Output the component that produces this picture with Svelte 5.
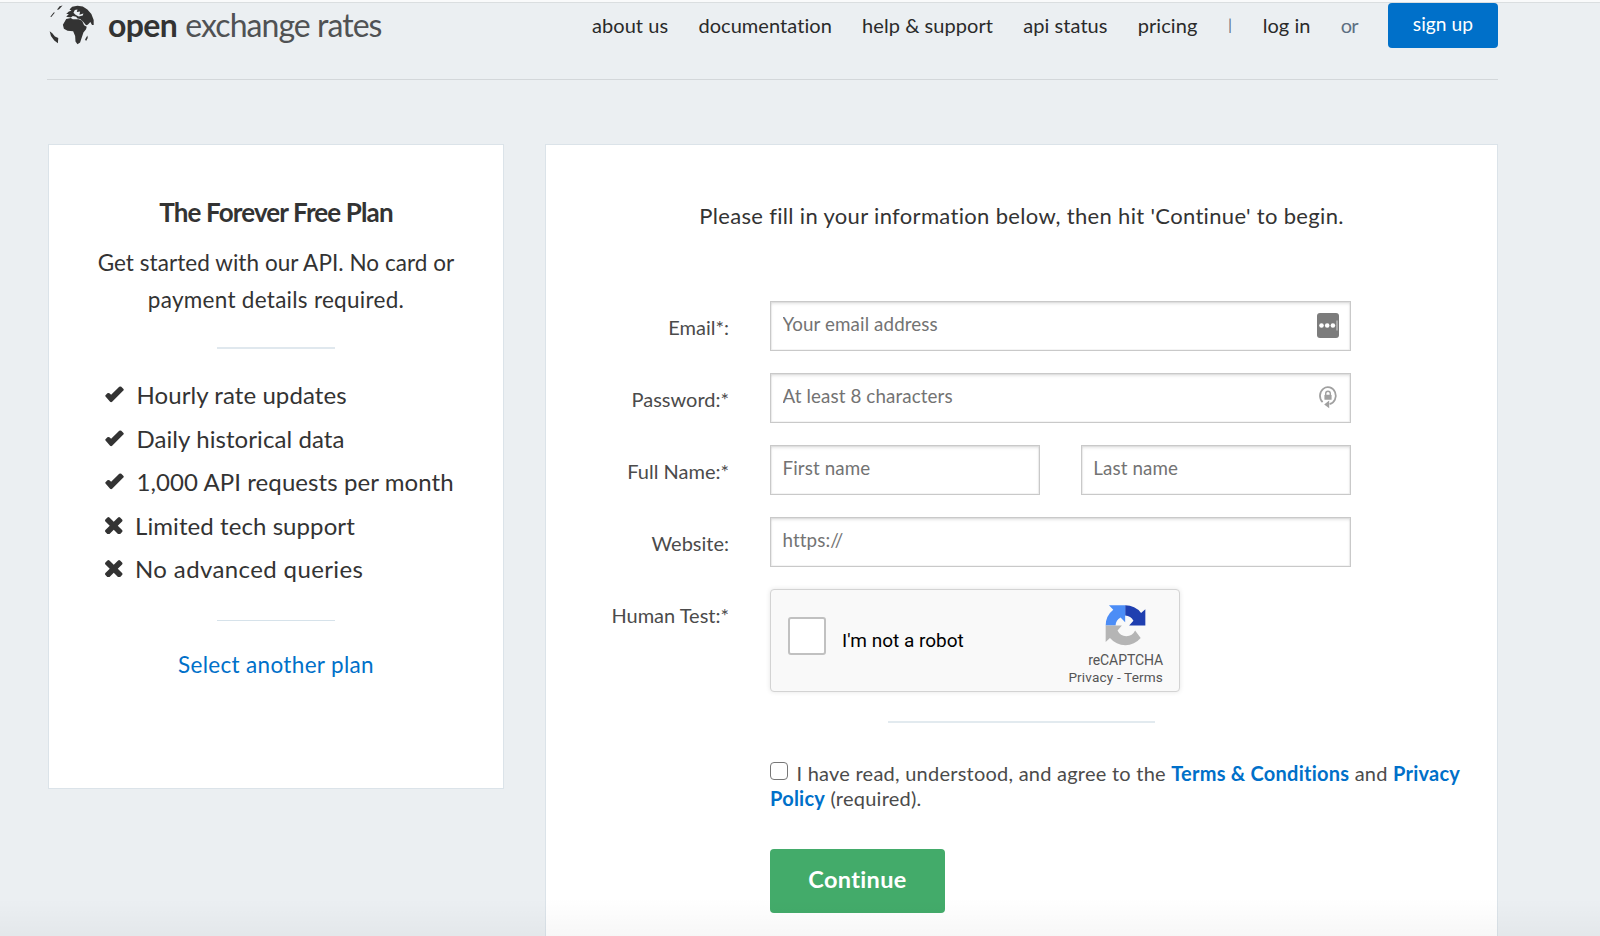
<script>
  const links = ['about us', 'documentation', 'help & support', 'api status', 'pricing'];
  const features = [
    { ok: true, text: 'Hourly rate updates' },
    { ok: true, text: 'Daily historical data' },
    { ok: true, text: '1,000 API requests per month' },
    { ok: false, text: 'Limited tech support' },
    { ok: false, text: 'No advanced queries', wide: true }
  ];
</script>

<div class="page">
  <header class="header">
    <a class="brand" href="#home" aria-label="open exchange rates">
      <svg class="globe" viewBox="50 12 148 126" aria-hidden="true">
        <path d="M108 42L116 34L124 32L118 28L126 20L142 17L158 19L172 28L184 42L191 60L191 75L186 75L181 66L173 74L168 76L158 64L150 57L142 55L138 50L128 48L122 52L108 50L116 42Z" />
        <path d="M98 74L108 57L122 54L128 58L146 58L156 62L162 76L170 80L168 88L160 98L156 110L150 128L142 133L136 125L135 108L129 94L112 92L101 86Z" />
        <path d="M88 18L97 16L86 28L80 29ZM70 37L74 37L63 51L60 50ZM58 94L66 100L74 110L84 114L83 130L72 122L62 108ZM165 119L172 107L173 114L168 123Z" />
        <path class="gap" d="M134 30L142 28L140 36L150 34L148 44L160 40L158 46L146 49L136 44L130 38Z" />
      </svg>
      <span class="wordmark"><b>open</b><span>exchange rates</span></span>
    </a>
    <nav class="nav">
      {#each links as link}<a href="#nav">{link}</a>{/each}
      <span class="muted bar">|</span>
      <a href="#login">log in</a>
      <span class="muted or">or</span>
      <a class="signup" href="#signup">sign up</a>
    </nav>
  </header>

  <main class="columns">
    <aside class="card plan">
      <h2>The Forever Free Plan</h2>
      <p>Get started with our API. No card or<br /><span class="second">payment details required.</span></p>
      <hr class="rule first" />
      <ul>
        {#each features as f}
          <li class:cross={!f.ok} class:wide={f.wide}>
            {#if f.ok}
              <svg class="mark" viewBox="0 0 56 50" aria-hidden="true"><path d="M1.500 31Q0 29 1.500 27L7 21.500Q10 19 13 21.500L18 25.500L42 2.500Q45 0 48 2.500L54.500 8.500Q56.500 11 54 13.500L21 46.500Q18 49 15 46.500Z" /></svg>
            {:else}
              <svg class="mark" viewBox="302 366 1188 1188" aria-hidden="true"><path d="M1490 1322q0 40-28 68l-136 136q-28 28-68 28t-68-28l-294-294-294 294q-28 28-68 28t-68-28l-136-136q-28-28-28-68t28-68l294-294-294-294q-28-28-28-68t28-68l136-136q28-28 68-28t68 28l294 294 294-294q28-28 68-28t68 28l136 136q28 28 28 68t-28 68l-294 294 294 294q28 28 28 68z" /></svg>
            {/if}
            <span>{f.text}</span>
          </li>
        {/each}
      </ul>
      <hr class="rule" />
      <a class="switch" href="#plans">Select another plan</a>
    </aside>

    <section class="card account">
      <p class="intro">Please fill in your information below, then hit 'Continue' to begin.</p>
      <form class="form">
        <label for="email">Email*:</label>
        <div class="field">
          <input id="email" placeholder="Your email address" />
          <svg class="addon" viewBox="0 0 22 25" aria-hidden="true">
            <rect width="22" height="25" rx="3" fill="#7c7c7c" />
            <circle cx="4.5" cy="12.5" r="2.3" fill="#fff" /><circle cx="10.2" cy="12.5" r="2.3" fill="#fff" /><circle cx="15.9" cy="12.5" r="2.3" fill="#fff" />
            <path d="M20 7.5v10" stroke="#d6d6d6" />
          </svg>
        </div>

        <label for="password">Password:*</label>
        <div class="field">
          <input id="password" placeholder="At least 8 characters" />
          <svg class="addon lock" viewBox="0 0 22 25" aria-hidden="true">
            <path d="M5.600 17.200A7.900 8.600 0 1 1 12.600 19.200" fill="none" stroke="#a0a0a0" stroke-width="1.8" />
            <path d="M7.200 19.400L12.200 15.600V23.200Z" fill="#a0a0a0" />
            <path d="M8.700 10.400V8.600a2.300 2.300 0 0 1 4.600 0V10.400" fill="none" stroke="#a0a0a0" stroke-width="1.4" />
            <rect x="7.4" y="9.8" width="7.2" height="5" rx=".6" fill="#a0a0a0" />
          </svg>
        </div>

        <label for="first">Full Name:*</label>
        <div class="field pair">
          <input id="first" placeholder="First name" />
          <input placeholder="Last name" aria-label="Last name" />
        </div>

        <label for="site">Website:</label>
        <div class="field"><input id="site" placeholder="https://" /></div>

        <span class="label">Human Test:*</span>
        <div class="captcha">
          <span class="box"></span>
          <span class="robot">I'm not a robot</span>
          <div class="badge">
            <svg viewBox="226 104 122 124" aria-hidden="true">
              <path fill="#1f3fb0" d="M286 105A61 61 0 0 1 334 128L347 117V166H298L311 152A29 29 0 0 0 286 136Z" />
              <path fill="#4c8df6" d="M286 105H237L250 118A61 61 0 0 0 227 166H257A29 29 0 0 1 272 142L286 156Z" />
              <path fill="#b5b5b5" d="M227 166H276L263 181A29 29 0 0 0 316 181L333 204A61 61 0 0 1 240 204L227 216Z" />
            </svg>
            <span class="name">reCAPTCHA</span>
            <span class="legal">Privacy - Terms</span>
          </div>
        </div>

        <div class="finish">
          <hr class="rule long" />
          <p class="terms">
            <span class="tick"></span>I have read, understood, and agree to the <a href="#terms">Terms &amp; Conditions</a> and <a href="#privacy">Privacy Policy</a> (required).
          </p>
          <button type="button">Continue</button>
        </div>
      </form>
    </section>
  </main>
  <div class="shade"></div>
</div>

<style>
  :global(body) {
    background: #ebeff2;
    font-family: Lato, sans-serif;
    color: #333;
    overflow: hidden;
  }
  .page {
    position: relative;
    box-sizing: border-box;
    height: 936px;
    padding: 0 102px 0 47px;
    overflow: hidden;
    border-top: 2px solid #f9fafb;
    box-shadow: inset 0 1px #dadee0;
    font-variant-ligatures: none;
  }
  a { color: #0070c9; text-decoration: none; }
  h2, p, ul { margin: 0; padding: 0; }

  .header {
    display: flex;
    justify-content: space-between;
    box-sizing: border-box;
    height: 78px;
    padding-top: 1px;
    border-bottom: 1px solid #d3d7da;
  }
  .brand { display: flex; color: #333; }
  .globe { width: 49px; height: 42px; margin-top: 1px; fill: #333; }
  .globe .gap { fill: #ebeff2; }
  .wordmark {
    display: flex;
    gap: 8px;
    margin-left: 12px;
    font-size: 32px;
    line-height: 43px;
    letter-spacing: -0.95px;
  }
  .wordmark b { letter-spacing: -0.6px; }
  .wordmark span { color: #505254; }
  .nav {
    display: flex;
    align-items: flex-start;
    gap: 30.2px;
    font-size: 20px;
    line-height: 44px;
    letter-spacing: 0.06px;
  }
  .nav a { color: #2a2a2a; }
  .nav .muted { color: #5d6f82; }
  .nav .bar { width: 5px; font-size: 16px; line-height: 42px; text-align: center; }
  .nav .or { letter-spacing: -0.8px; }
  .nav a.signup {
    box-sizing: border-box;
    width: 110px;
    height: 45px;
    border-radius: 4px;
    background: #0070c9;
    color: #fff;
    font-size: 19.2px;
    line-height: 41px;
    text-align: center;
  }

  .columns {
    display: grid;
    grid-template-columns: 456px 953px;
    gap: 41px;
    align-items: start;
    margin: 64px 0 0 1px;
  }
  .card { box-sizing: border-box; border: 1px solid #dbe3e9; background: #fff; }
  .rule { border: 0; height: 1px; background: #d6e2ea; }

  .plan { height: 645px; padding-top: 49px; text-align: center; }
  h2 { font-size: 26px; line-height: 36px; letter-spacing: -0.87px; font-weight: 700; }
  .plan p { margin-top: 15px; font-size: 22.5px; line-height: 36.6px; letter-spacing: 0.05px; }
  .plan .second { letter-spacing: 0.28px; }
  .plan .rule { width: 118px; margin: 30px auto 0; }
  .plan .rule.first { height: 2px; margin-top: 28.8px; background: #e0e8ee; }
  .plan ul { margin-top: 24.4px; list-style: none; text-align: left; }
  .plan ul + .rule { margin-top: 29.6px; }
  li { display: flex; height: 43.4px; padding-left: 56px; font-size: 24px; line-height: 43.4px; letter-spacing: 0.08px; }
  li span { margin-left: 12.5px; }
  li.wide { letter-spacing: 0.38px; }
  .mark { width: 19px; height: 17px; margin-top: 13px; fill: #333; }
  .cross .mark { width: 17.5px; height: 17.5px; }
  .switch { display: block; margin-top: 26px; font-size: 22.5px; line-height: 36px; letter-spacing: 0.33px; }

  .account { height: 830px; padding: 53px 0 0 25px; }
  .intro { margin-left: -25px; font-size: 22px; line-height: 36px; letter-spacing: 0.33px; text-align: center; }
  .form {
    display: grid;
    grid-template-columns: 158px 705px;
    column-gap: 41px;
    row-gap: 22px;
    margin-top: 67px;
    color: #4b4b4b;
    font-size: 20px;
  }
  label, .label { padding-top: 1px; line-height: 50px; text-align: right; height: 49px; }
  .field { position: relative; display: flex; width: 580.5px; height: 50px; }
  .field.pair { gap: 41px; }
  input {
    box-sizing: border-box;
    flex: 1;
    min-width: 0;
    height: 50px;
    padding: 0 11.5px 6px;
    border: 1px solid #c9c9c9;
    border-radius: 0;
    box-shadow: inset 0 2px 3px rgba(0, 0, 0, 0.1), inset 0 0 0 1px rgba(0, 0, 0, 0.04);
    background: #fff;
    font: 18.8px Lato, sans-serif;
    letter-spacing: 0.1px;
  }
  input::placeholder { color: #737373; }
  .addon { position: absolute; top: 12px; right: 12px; width: 22px; height: 25px; }

  .captcha {
    display: flex;
    box-sizing: border-box;
    width: 410px;
    height: 103px;
    margin-top: -0.3px;
    padding: 0 16px 0 17px;
    border: 1px solid #d3d3d3;
    border-radius: 4px;
    background: #f9f9f9;
    box-shadow: 0 0 5px rgba(0, 0, 0, 0.1);
    font-family: Roboto, sans-serif;
    color: #555;
  }
  .box { box-sizing: border-box; width: 38px; height: 38px; margin-top: 27.5px; border: 2px solid #c1c1c1; border-radius: 3px; background: #fff; }
  .robot { margin: 36px auto 0 16px; color: #000; font-size: 19px; line-height: 30px; }
  .badge { display: flex; flex-direction: column; align-items: flex-end; }
  .badge svg { width: 41px; height: 41px; margin: 15px 17px 0 0; }
  .name { margin-top: 6px; font-size: 14px; line-height: 17px; letter-spacing: -0.1px; }
  .legal { font-size: 13.6px; line-height: 17px; letter-spacing: 0.15px; }

  .finish { grid-column: 2; margin-top: 7px; }
  .long { width: 267px; height: 2px; margin: 0 0 0 118px; background: #e2eaef; }
  .terms { margin-top: 38.6px; font-size: 20px; line-height: 24.6px; letter-spacing: 0.24px; }
  .terms a { font-weight: 700; }
  .tick { display: inline-block; box-sizing: border-box; width: 18px; height: 18px; margin-right: 8.5px; border: 1.5px solid #777; border-radius: 4px; background: #fff; vertical-align: 1px; }
  button {
    display: block;
    width: 175px;
    height: 64px;
    margin-top: 39px;
    padding: 0 0 4px;
    border: 0;
    border-radius: 4px;
    background: #43ab6a;
    color: #fff;
    font: 700 23.5px Lato, sans-serif;
    letter-spacing: 0.35px;
  }
  .shade {
    position: absolute;
    inset: auto 0 0 0;
    height: 38px;
    background: linear-gradient(rgba(0, 0, 0, 0), rgba(0, 0, 0, 0.03));
    pointer-events: none;
  }
</style>
